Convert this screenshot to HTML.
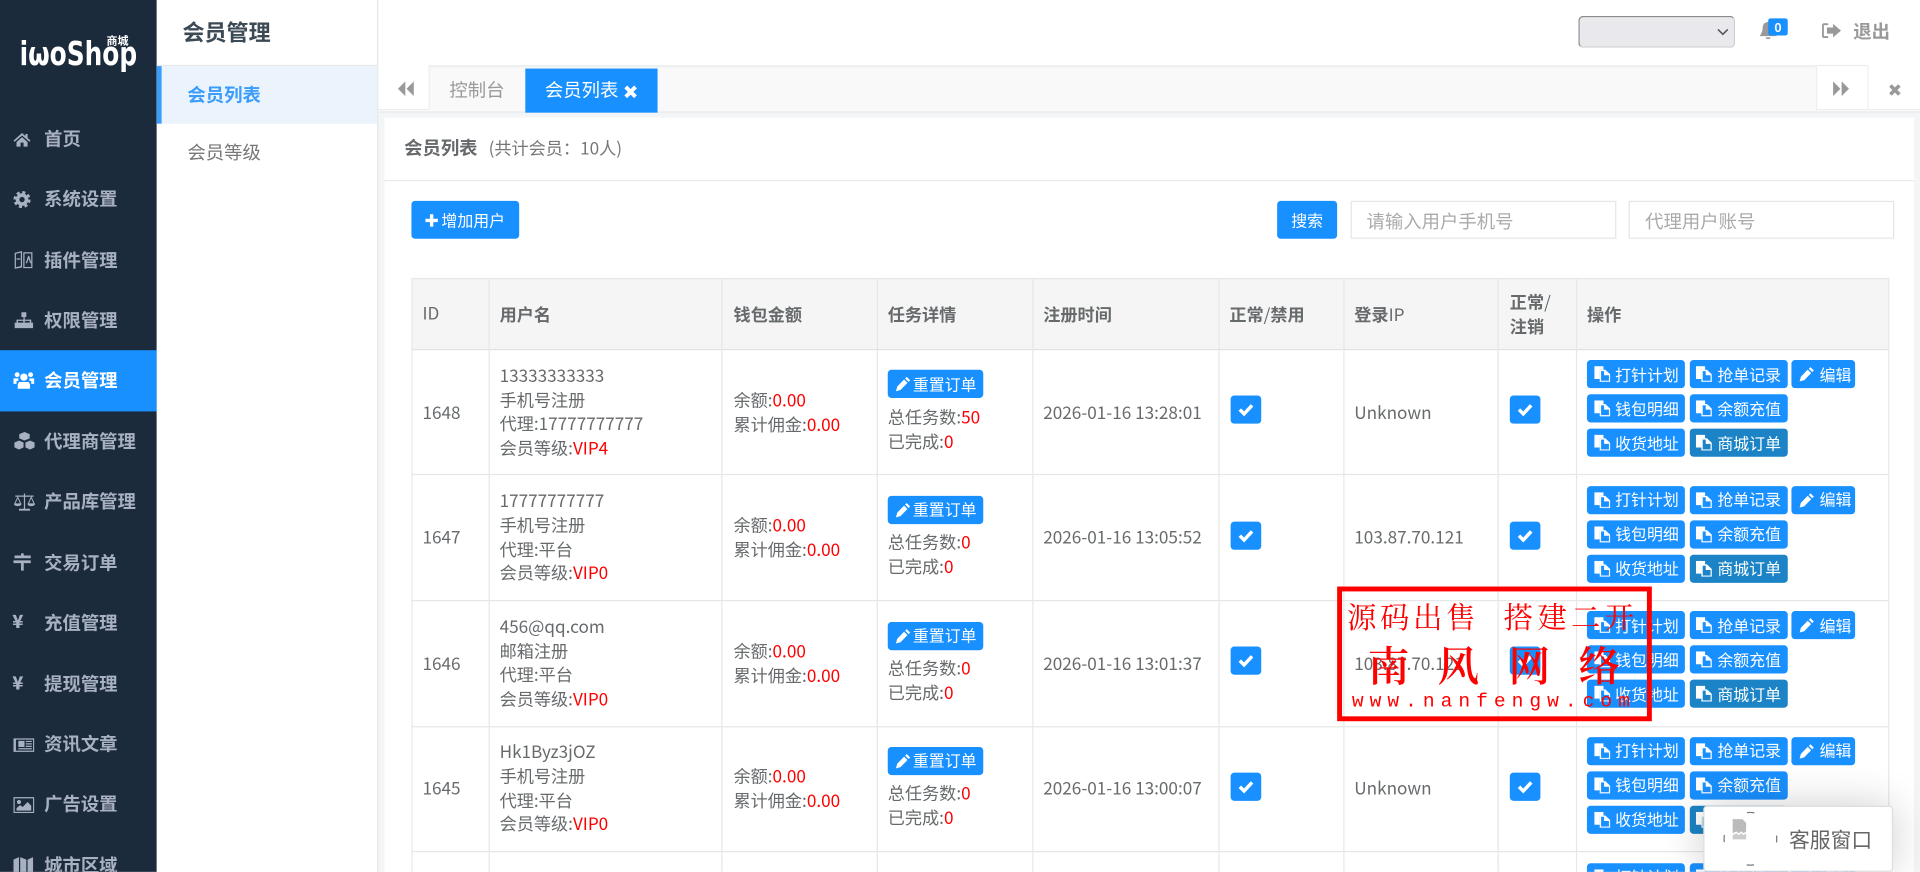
<!DOCTYPE html>
<html lang="zh-CN"><head><meta charset="utf-8"><title>会员列表</title>
<style>
html,body{margin:0;padding:0;width:1920px;height:872px;overflow:hidden;background:#fff}
#p{position:absolute;left:0;top:0;width:1568px;height:712.2px;overflow:hidden;transform:scale(1.22449);transform-origin:0 0;background:#f4f5f7;font:14px/20px "Noto Sans CJK SC","Liberation Sans",sans-serif;color:#676a6c;filter:blur(.3px)}
#p div,#p span.a,#p svg.a{position:absolute;white-space:nowrap}
.side{left:0;top:0;width:128px;height:713px;background:#1c2b3c}
.nv{left:0;width:128px;height:49px;line-height:49px;color:#a7b1c2;font-weight:700;font-size:15px;text-indent:36px}
.nv svg{position:absolute;left:10.5px;top:16.5px;width:17px;height:16px;fill:#a7b1c2}
.nv b{position:absolute;left:10px;top:-1px;text-indent:0;font-size:15px}
.nv.on{background:#1890ff;color:#fff}.nv.on svg{fill:#fff}
.btn{background:#1890ff;color:#fff;border-radius:3px;height:23px;line-height:23px;font-size:13px}
.btn svg{position:absolute;left:5.5px;top:5px;width:13px;height:13px;fill:#fff}
.btn span{position:absolute;left:23px;top:-.5px}
.w{width:80px}.e{width:52px}.d{background:#1c84c6}
.ck{width:25px;height:23px;background:#1890ff;border-radius:3px;top:38px}
.ck svg{position:absolute;left:6px;top:6px;width:13px;height:11px;fill:none;stroke:#fff;stroke-width:2.8}
.r{left:0;width:1568px;height:103px}
.r>div:not(.btn):not(.ck){margin-top:.8px}
.red{color:#f00}
.vl{top:227px;width:1px;height:486px;background:#e7e7e7}
.hl{left:336px;width:1206px;height:1px;background:#e7e7e7}
.th{font-weight:700;top:246.5px}
.th i{font-style:normal;font-weight:400}
.wm{color:#f00;font-family:"Noto Serif CJK SC",serif}
.u{left:408px;top:12px;line-height:19.7px}
.m{left:599px;top:32px;line-height:19.7px}
.t{left:725px;top:46px;line-height:19.7px}
</style></head><body>
<svg width="0" height="0" style="position:absolute">
<symbol id="f" viewBox="0 0 13 13"><path d="M0 0h7.500v3H4.500v7.500H0z" fill="#fff"/><path d="M5 3.500h3.800L12.500 7v5.500H5z" fill="none" stroke="#fff" stroke-width="1.100"/><path d="M8 3.500v4h4.500z" fill="#fff"/><path d="M4.500 12.200h8v.8h-8z" fill="#cfe6ff"/></symbol>
<symbol id="pn" viewBox="0 0 13 13"><path d="M9.500 .8l2.800 2.800-1.300 1.300-2.800-2.800zM7.300 2.900l2.800 2.800-5.700 5.800-3.700 1 1-3.800z" fill="#fff"/></symbol>
</svg>
<div id="p">

<!-- sidebar -->
<div class="side"></div>
<svg class="a" style="left:14px;top:25px" width="100" height="40" viewBox="0 0 100 40"><text x="2" y="28" font-family="'DejaVu Sans',sans-serif" font-weight="700" font-size="27" fill="#fff" textLength="96" lengthAdjust="spacingAndGlyphs">iωoShop</text><text x="73" y="11.500" font-family="'Noto Sans CJK SC',sans-serif" font-weight="700" font-size="9" fill="#fff">商城</text></svg>
<div class="nv" style="top:89px"><svg viewBox="0 0 17 16" style="width:14px"><path d="M8.500 1.500L0 9l1.200 1.200L8.500 4l7.300 6.200L17 9l-3-2.600V2.500h-2.200v2z M8.500 5.500l5.500 5v4.500H10v-4H7v4H3v-4.500z"/></svg>首页</div>
<div class="nv" style="top:138px"><svg viewBox="0 0 16 16" style="width:14px;height:14px;top:17.500px"><circle cx="8" cy="8" r="4.200" fill="none" stroke="#a7b1c2" stroke-width="3.400"/><circle cx="8" cy="8" r="6.800" fill="none" stroke="#a7b1c2" stroke-width="2.400" stroke-dasharray="2.900 2.440"/></svg>系统设置</div>
<div class="nv" style="top:187.500px"><svg viewBox="0 0 17 16"><path d="M1 2.500L7 1v13.500L1 15.500zM2 3.300v11l4-1V2.300z"/><path d="M8.500 2.500H15v12H8.500z" fill="none" stroke="#a7b1c2"/><path d="M10 11l2-6h.8l2 6h-1.100l-1.300-3.800L11.100 11zM2.500 7h3v1h-3z"/></svg>插件管理</div>
<div class="nv" style="top:237px"><svg viewBox="0 0 17 16"><path d="M6.500 1h4v4H9.200v2h5.300v2.500H16V14h-5V9.500h2.300V8H9.200v1.500H11V14H6V9.500h2V8H3.700v1.500H6V14H1V9.500h1.500V7h5.700V5H6.500z"/></svg>权限管理</div>
<div class="nv on" style="top:286px;height:49.500px"><svg viewBox="0 0 17 16"><circle cx="8.500" cy="5" r="3"/><circle cx="3" cy="3" r="2"/><circle cx="14" cy="3" r="2"/><path d="M4.500 9h8l1 2v3.500h-10V11zM0 6h4v2H2.500v2.500H0zM13 6h4v4.500h-2.500V8H13z"/></svg>会员管理</div>
<div class="nv" style="top:335.500px"><svg viewBox="0 0 18 16" style="width:18px"><path d="M9 .5l4.500 1.900v3.800L9 8 4.500 6.200V2.400zM4.500 7.500l4 1.700v4.300l-4 1.900L.5 13.500V9.200zM13.500 7.500l4 1.700v4.300l-4 1.900-4-1.900V9.200z" stroke="#1c2b3c" stroke-width=".5"/></svg>代理商管理</div>
<div class="nv" style="top:385px"><svg viewBox="0 0 18 16" style="width:18px"><path d="M8.500 1h1v12.500h4V15h-9v-1.500h4z"/><path d="M1.500 3.200h15" stroke="#a7b1c2" fill="none"/><path d="M3.500 4L1 9.500h5zM14.500 4L12 9.500h5z" fill="none" stroke="#a7b1c2" stroke-width=".8"/><path d="M.5 9.500h6C6.500 12 .5 12 .5 9.500zM11.500 9.500h6c0 2.500-6 2.500-6 0z"/></svg>产品库管理</div>
<div class="nv" style="top:434.500px"><svg viewBox="0 0 17 16" style="width:15px"><path d="M7 0h2.500v2H16v2.500H1V2h6zM0 6.500h16V9H9.500v7H7V9H0z"/></svg>交易订单</div>
<div class="nv" style="top:484px"><b>¥</b>充值管理</div>
<div class="nv" style="top:533.500px"><b>¥</b>提现管理</div>
<div class="nv" style="top:583px"><svg viewBox="0 0 17 16"><path d="M0 3h17v11H0z M2 4v9h14V4z" fill-rule="evenodd"/><path d="M4 5h5v5H4zM10 5h5v1h-5zM10 7h5v1h-5zM10 9h5v1h-5zM4 11h11v1H4z"/></svg>资讯文章</div>
<div class="nv" style="top:632px"><svg viewBox="0 0 17 16"><path d="M0 2h17v13H0z M1 3v11h15V3z" fill-rule="evenodd"/><circle cx="4.500" cy="6" r="1.700"/><path d="M2.500 13v-2l3-2.500 2 1.500 4-4 3 3v4z"/></svg>广告设置</div>
<div class="nv" style="top:682px"><svg viewBox="0 0 17 16"><path d="M0 3l4.500-2v12L0 15zM5.500 1l5 2v12l-5-2zM11.500 3L16 1v12l-4.500 2z"/></svg>城市区域</div>

<!-- second menu -->
<div style="left:128px;top:0;width:180px;height:713px;background:#fff"></div>
<div style="left:308px;top:0;width:1.200px;height:713px;background:#e4e6e8"></div>
<div style="left:149px;top:13px;font-size:18px;line-height:26px;font-weight:700;color:#3c4a55">会员管理</div>
<div style="left:128px;top:53px;width:180px;height:1px;background:#e5e7ea"></div>
<div style="left:128px;top:54px;width:180px;height:47px;background:#ebf3fd"></div>
<div style="left:128px;top:54px;width:4px;height:47px;background:#3a9cfb"></div>
<div style="left:153px;top:67px;font-size:15px;line-height:22px;font-weight:700;color:#3a9cfb">会员列表</div>
<div style="left:153px;top:113.700px;font-size:15px;line-height:22px;color:#777">会员等级</div>

<!-- header -->
<div style="left:309.200px;top:0;width:1259px;height:53px;background:#fff;border-bottom:1px solid #eceef0"></div>
<div style="left:1289px;top:13px;width:126px;height:23.500px;background:#e9e9ed;border:1.200px solid;border-color:#8a8a8a #cfcfcf #cfcfcf #8a8a8a;border-radius:4px"></div>
<svg class="a" style="left:1402px;top:22px" width="10" height="8" viewBox="0 0 10 8"><path d="M1 2l4 4 4-4" fill="none" stroke="#555" stroke-width="1.300"/></svg>
<svg class="a" style="left:1437px;top:17px" width="14" height="16" viewBox="0 0 14 16"><path d="M7 1c3 0 4.500 2 4.500 5 0 3 1.500 5 2.500 6.500H0C1 11 2.500 9 2.500 6 2.500 3 4 1 7 1zM5 13.500h4C9 15.500 5 15.500 5 13.500z" fill="#9a9a9a"/></svg>
<div style="left:1444px;top:15px;width:16px;height:14px;background:#1890ff;border-radius:2px;color:#fff;font-size:10px;line-height:13px;font-weight:700;text-align:center">0</div>
<svg class="a" style="left:1487px;top:17.500px" width="17" height="15" viewBox="0 0 17 15"><path d="M6 1H2L1 2v10l1 1h4v-1.500H2.500v-9H6z" fill="#999"/><path d="M10 1.500L16.500 7 10 12.500V9.500H5v-5h5z" fill="#999"/></svg>
<div style="left:1513.500px;top:14.500px;font-size:15px;line-height:22px;font-weight:700;color:#999">退出</div>

<!-- tab strip -->
<div style="left:309.200px;top:54px;width:1259px;height:37.500px;background:#f9f9f9;border-top:1px solid #eceef0;border-bottom:1px solid #e6e9ec;box-sizing:border-box"></div>
<div style="left:309.200px;top:53px;width:42px;height:37px;background:#fff;border-right:1px solid #eceef0;border-bottom:1px solid #eceef0;box-sizing:border-box"></div>
<svg class="a" style="left:323.500px;top:66px" width="14" height="13" viewBox="0 0 14 12"><path d="M7 0v12L1 6zM14 0v12L8 6z" fill="#999"/></svg>
<div style="left:367px;top:63px;font-size:15px;line-height:22px;color:#999">控制台</div>
<div style="left:429px;top:55.500px;width:107.500px;height:36px;background:#1890ff"></div>
<div style="left:445px;top:63px;font-size:15px;line-height:22px;color:#fff">会员列表</div>
<svg class="a" style="left:508.500px;top:68.500px" width="12" height="12" viewBox="0 0 12 12"><path d="M2 2l8 8M10 2l-8 8" stroke="#fff" stroke-width="3.200" fill="none"/></svg>
<div style="left:1483px;top:53px;width:43px;height:37px;background:#fff;border:1px solid #eceef0;box-sizing:border-box"></div>
<div style="left:1526px;top:53px;width:43px;height:37px;background:#fff;border-bottom:1px solid #eceef0;box-sizing:border-box"></div>
<svg class="a" style="left:1497px;top:66px" width="14" height="13" viewBox="0 0 14 12"><path d="M0 0v12l6-6zM7 0v12l6-6z" fill="#999"/></svg>
<svg class="a" style="left:1542px;top:67.500px" width="11" height="11" viewBox="0 0 12 12"><path d="M2 2l8 8M10 2l-8 8" stroke="#999" stroke-width="3.200" fill="none"/></svg>

<!-- panel -->
<div style="left:314.200px;top:95.500px;width:1248.800px;height:618px;background:#fff"></div>
<div style="left:314.200px;top:147px;width:1248.800px;height:1px;background:#e7eaec"></div>
<div style="left:330px;top:110px;font-size:15px;line-height:22px;font-weight:700;color:#676a6c">会员列表</div>
<div style="left:399px;top:110.500px;font-size:14px;line-height:20px;color:#777">(共计会员：10人)</div>
<div class="btn" style="left:335.500px;top:164px;width:88px;height:31px;line-height:31px"><svg viewBox="0 0 12 13" style="left:11px;top:9.500px;width:11px;height:12px"><path d="M4.500 1h3v4h4v3h-4v4h-3V8h-4V5h4z"/></svg><span style="left:25px">增加用户</span></div>
<div class="btn" style="left:1043px;top:164px;width:49px;height:31px;line-height:31px;text-align:center">搜索</div>
<div style="left:1102.500px;top:164px;width:217px;height:31px;border:1px solid #e5e6e7;box-sizing:border-box;line-height:31px;padding-left:12.500px;color:#aaa;font-size:15px">请输入用户手机号</div>
<div style="left:1330px;top:164px;width:217px;height:31px;border:1px solid #e5e6e7;box-sizing:border-box;line-height:31px;padding-left:12.500px;color:#aaa;font-size:15px">代理用户账号</div>

<!-- table frame -->
<div style="left:336px;top:227px;width:1206px;height:58px;background:#f5f5f5"></div>
<div class="hl" style="top:227px"></div>
<div class="hl" style="top:285px;height:1.300px;background:#e2e2e2"></div>
<div class="hl" style="top:387.400px"></div>
<div class="hl" style="top:490.200px"></div>
<div class="hl" style="top:592.800px"></div>
<div class="hl" style="top:695.200px"></div>
<div class="vl" style="left:336px"></div><div class="vl" style="left:399.300px"></div><div class="vl" style="left:589.300px"></div><div class="vl" style="left:716px"></div><div class="vl" style="left:843px"></div><div class="vl" style="left:995.300px"></div><div class="vl" style="left:1097px"></div><div class="vl" style="left:1223.300px"></div><div class="vl" style="left:1287px"></div><div class="vl" style="left:1542px"></div>
<div style="left:345px;top:246px">ID</div>
<div class="th" style="left:408px">用户名</div>
<div class="th" style="left:599px">钱包金额</div>
<div class="th" style="left:725px">任务详情</div>
<div class="th" style="left:852px">注册时间</div>
<div class="th" style="left:1004px">正常<i>/</i>禁用</div>
<div class="th" style="left:1106px">登录<i>IP</i></div>
<div class="th" style="left:1233px;top:237px">正常<i>/</i><br>注销</div>
<div class="th" style="left:1296px">操作</div>

<!-- row 1 -->
<div class="r" style="top:285px">
<div style="left:345px;top:41px">1648</div>
<div class="u">13333333333<br>手机号注册<br>代理:17777777777<br>会员等级:<span class="red">VIP4</span></div>
<div class="m">余额:<span class="red">0.00</span><br>累计佣金:<span class="red">0.00</span></div>
<div class="btn" style="left:725px;top:17px;width:78px"><svg viewBox="0 0 13 13"><use href="#pn"/></svg><span style="left:20.500px">重置订单</span></div>
<div class="t">总任务数:<span class="red">50</span><br>已完成:<span class="red">0</span></div>
<div style="left:852px;top:41px">2026-01-16 13:28:01</div>
<div class="ck" style="left:1005px"><svg viewBox="0 0 13 11"><path d="M1.500 5.500l3.500 3.500 6.500-7"/></svg></div>
<div style="left:1106px;top:41px">Unknown</div>
<div class="ck" style="left:1233px"><svg viewBox="0 0 13 11"><path d="M1.500 5.500l3.500 3.500 6.500-7"/></svg></div>
<div class="btn w" style="left:1296px;top:9px"><svg viewBox="0 0 13 13"><use href="#f"/></svg><span>打针计划</span></div>
<div class="btn w" style="left:1379.500px;top:9px"><svg viewBox="0 0 13 13"><use href="#f"/></svg><span>抢单记录</span></div>
<div class="btn e" style="left:1463px;top:9px"><svg viewBox="0 0 13 13"><use href="#pn"/></svg><span>编辑</span></div>
<div class="btn w" style="left:1296px;top:37px"><svg viewBox="0 0 13 13"><use href="#f"/></svg><span>钱包明细</span></div>
<div class="btn w" style="left:1379.500px;top:37px"><svg viewBox="0 0 13 13"><use href="#f"/></svg><span>余额充值</span></div>
<div class="btn w" style="left:1296px;top:65px"><svg viewBox="0 0 13 13"><use href="#f"/></svg><span>收货地址</span></div>
<div class="btn w d" style="left:1379.500px;top:65px"><svg viewBox="0 0 13 13"><use href="#f"/></svg><span>商城订单</span></div>
</div>

<!-- row 2 -->
<div class="r" style="top:387.500px">
<div style="left:345px;top:41px">1647</div>
<div class="u">17777777777<br>手机号注册<br>代理:平台<br>会员等级:<span class="red">VIP0</span></div>
<div class="m">余额:<span class="red">0.00</span><br>累计佣金:<span class="red">0.00</span></div>
<div class="btn" style="left:725px;top:17px;width:78px"><svg viewBox="0 0 13 13"><use href="#pn"/></svg><span style="left:20.500px">重置订单</span></div>
<div class="t">总任务数:<span class="red">0</span><br>已完成:<span class="red">0</span></div>
<div style="left:852px;top:41px">2026-01-16 13:05:52</div>
<div class="ck" style="left:1005px"><svg viewBox="0 0 13 11"><path d="M1.500 5.500l3.500 3.500 6.500-7"/></svg></div>
<div style="left:1106px;top:41px">103.87.70.121</div>
<div class="ck" style="left:1233px"><svg viewBox="0 0 13 11"><path d="M1.500 5.500l3.500 3.500 6.500-7"/></svg></div>
<div class="btn w" style="left:1296px;top:9px"><svg viewBox="0 0 13 13"><use href="#f"/></svg><span>打针计划</span></div>
<div class="btn w" style="left:1379.500px;top:9px"><svg viewBox="0 0 13 13"><use href="#f"/></svg><span>抢单记录</span></div>
<div class="btn e" style="left:1463px;top:9px"><svg viewBox="0 0 13 13"><use href="#pn"/></svg><span>编辑</span></div>
<div class="btn w" style="left:1296px;top:37px"><svg viewBox="0 0 13 13"><use href="#f"/></svg><span>钱包明细</span></div>
<div class="btn w" style="left:1379.500px;top:37px"><svg viewBox="0 0 13 13"><use href="#f"/></svg><span>余额充值</span></div>
<div class="btn w" style="left:1296px;top:65px"><svg viewBox="0 0 13 13"><use href="#f"/></svg><span>收货地址</span></div>
<div class="btn w d" style="left:1379.500px;top:65px"><svg viewBox="0 0 13 13"><use href="#f"/></svg><span>商城订单</span></div>
</div>

<!-- row 3 -->
<div class="r" style="top:490px">
<div style="left:345px;top:41px">1646</div>
<div class="u">456@qq.com<br>邮箱注册<br>代理:平台<br>会员等级:<span class="red">VIP0</span></div>
<div class="m">余额:<span class="red">0.00</span><br>累计佣金:<span class="red">0.00</span></div>
<div class="btn" style="left:725px;top:17.500px;width:78px"><svg viewBox="0 0 13 13"><use href="#pn"/></svg><span style="left:20.500px">重置订单</span></div>
<div class="t">总任务数:<span class="red">0</span><br>已完成:<span class="red">0</span></div>
<div style="left:852px;top:41px">2026-01-16 13:01:37</div>
<div class="ck" style="left:1005px"><svg viewBox="0 0 13 11"><path d="M1.500 5.500l3.500 3.500 6.500-7"/></svg></div>
<div style="left:1106px;top:41px">103.87.70.121</div>
<div class="ck" style="left:1233px"><svg viewBox="0 0 13 11"><path d="M1.500 5.500l3.500 3.500 6.500-7"/></svg></div>
<div class="btn w" style="left:1296px;top:9px"><svg viewBox="0 0 13 13"><use href="#f"/></svg><span>打针计划</span></div>
<div class="btn w" style="left:1379.500px;top:9px"><svg viewBox="0 0 13 13"><use href="#f"/></svg><span>抢单记录</span></div>
<div class="btn e" style="left:1463px;top:9px"><svg viewBox="0 0 13 13"><use href="#pn"/></svg><span>编辑</span></div>
<div class="btn w" style="left:1296px;top:37px"><svg viewBox="0 0 13 13"><use href="#f"/></svg><span>钱包明细</span></div>
<div class="btn w" style="left:1379.500px;top:37px"><svg viewBox="0 0 13 13"><use href="#f"/></svg><span>余额充值</span></div>
<div class="btn w" style="left:1296px;top:65px"><svg viewBox="0 0 13 13"><use href="#f"/></svg><span>收货地址</span></div>
<div class="btn w d" style="left:1379.500px;top:65px"><svg viewBox="0 0 13 13"><use href="#f"/></svg><span>商城订单</span></div>
</div>

<!-- row 4 -->
<div class="r" style="top:592.500px">
<div style="left:345px;top:41px">1645</div>
<div class="u">Hk1Byz3jOZ<br>手机号注册<br>代理:平台<br>会员等级:<span class="red">VIP0</span></div>
<div class="m">余额:<span class="red">0.00</span><br>累计佣金:<span class="red">0.00</span></div>
<div class="btn" style="left:725px;top:17px;width:78px"><svg viewBox="0 0 13 13"><use href="#pn"/></svg><span style="left:20.500px">重置订单</span></div>
<div class="t">总任务数:<span class="red">0</span><br>已完成:<span class="red">0</span></div>
<div style="left:852px;top:41px">2026-01-16 13:00:07</div>
<div class="ck" style="left:1005px"><svg viewBox="0 0 13 11"><path d="M1.500 5.500l3.500 3.500 6.500-7"/></svg></div>
<div style="left:1106px;top:41px">Unknown</div>
<div class="ck" style="left:1233px"><svg viewBox="0 0 13 11"><path d="M1.500 5.500l3.500 3.500 6.500-7"/></svg></div>
<div class="btn w" style="left:1296px;top:9px"><svg viewBox="0 0 13 13"><use href="#f"/></svg><span>打针计划</span></div>
<div class="btn w" style="left:1379.500px;top:9px"><svg viewBox="0 0 13 13"><use href="#f"/></svg><span>抢单记录</span></div>
<div class="btn e" style="left:1463px;top:9px"><svg viewBox="0 0 13 13"><use href="#pn"/></svg><span>编辑</span></div>
<div class="btn w" style="left:1296px;top:37px"><svg viewBox="0 0 13 13"><use href="#f"/></svg><span>钱包明细</span></div>
<div class="btn w" style="left:1379.500px;top:37px"><svg viewBox="0 0 13 13"><use href="#f"/></svg><span>余额充值</span></div>
<div class="btn w" style="left:1296px;top:65px"><svg viewBox="0 0 13 13"><use href="#f"/></svg><span>收货地址</span></div>
<div class="btn w d" style="left:1379.500px;top:65px"><svg viewBox="0 0 13 13"><use href="#f"/></svg><span>商城订单</span></div>
</div>

<!-- row 5 (clipped) -->
<div class="r" style="top:695px;height:18px;overflow:hidden">
<div class="btn w" style="left:1296px;top:9.500px"><svg viewBox="0 0 13 13"><use href="#f"/></svg><span>打针计划</span></div>
<div class="btn w" style="left:1379.500px;top:9.500px"><svg viewBox="0 0 13 13"><use href="#f"/></svg><span>抢单记录</span></div>
<div class="btn e" style="left:1463px;top:9.500px"><svg viewBox="0 0 13 13"><use href="#pn"/></svg><span>编辑</span></div>
</div>

<!-- watermark -->
<div style="left:1092px;top:478.500px;width:257px;height:110px;border:4.300px solid #f00;box-sizing:border-box"></div>
<div class="wm" style="left:1100px;top:487.500px;font-size:24px;line-height:30px;letter-spacing:3px">源码出售</div>
<div class="wm" style="left:1228px;top:487.500px;font-size:24px;line-height:30px;letter-spacing:3.500px">搭建二开</div>
<div class="wm" style="left:1117px;top:520px;font-size:34px;line-height:44px;font-weight:600">南</div>
<div class="wm" style="left:1174px;top:520px;font-size:34px;line-height:44px;font-weight:600">风</div>
<div class="wm" style="left:1232px;top:520px;font-size:34px;line-height:44px;font-weight:600">网</div>
<div class="wm" style="left:1289px;top:520px;font-size:34px;line-height:44px;font-weight:600">络</div>
<div style="left:1104px;top:563px;font:16px/20px 'Liberation Mono',monospace;letter-spacing:4.900px;color:#f00">www.nanfengw.com</div>

<!-- service box -->
<div style="left:1391px;top:657.500px;width:154.500px;height:54.500px;background:#fff;border:1px solid #dedede;border-radius:3px;box-sizing:border-box;box-shadow:0 0 34px rgba(0,0,0,.2)"></div>
<svg class="a" style="left:1406px;top:662px" width="48" height="46" viewBox="0 0 48 46"><circle cx="23.500" cy="23" r="21.500" fill="none" stroke="#777" stroke-width="1" stroke-dasharray="6 27.800" stroke-dashoffset="3"/><path d="M9 7h8l3 3v7l-2 1.500-2-1.500-2 1.500-2-1.500-3 1.500z" fill="#bbb"/><path d="M9 20l3-1.500 2 1.500 2-1.500 2 1.500 2-1.500v5H9z" fill="#ccc"/></svg>
<div style="left:1461px;top:673px;font-size:17px;line-height:24px;color:#666">客服窗口</div>

</div></body></html>
